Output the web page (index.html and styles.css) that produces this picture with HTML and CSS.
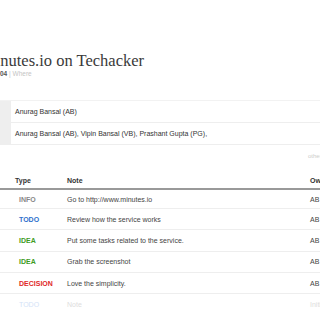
FILE: index.html
```html
<!DOCTYPE html>
<html lang="en">
<head>
  <meta charset="UTF-8">
  <title>Minutes.io on Techacker</title>
  <link rel="stylesheet" href="styles.css">
</head>
<body>
  <div class="page">
    <h1 class="title">Minutes.io on Techacker</h1>
    <div class="meta"><b>04</b> <span class="sep">|</span> <span class="where">Where</span></div>

    <div class="people">
      <div class="prow">
        <div class="plabel"></div>
        <div class="pval">Anurag Bansal (AB)</div>
      </div>
      <div class="prow">
        <div class="plabel"></div>
        <div class="pval">Anurag Bansal (AB), Vipin Bansal (VB), Prashant Gupta (PG),</div>
      </div>
    </div>

    <div class="others">others</div>

    <div class="notes">
      <div class="nrow head">
        <div class="type">Type</div>
        <div class="note">Note</div>
        <div class="owner">Owner</div>
      </div>
      <div class="nrow first">
        <div class="type info">INFO</div>
        <div class="note">Go to http://www.minutes.io</div>
        <div class="owner">AB</div>
      </div>
      <div class="nrow">
        <div class="type todo">TODO</div>
        <div class="note">Review how the service works</div>
        <div class="owner">AB</div>
      </div>
      <div class="nrow">
        <div class="type idea">IDEA</div>
        <div class="note">Put some tasks related to the service.</div>
        <div class="owner">AB</div>
      </div>
      <div class="nrow">
        <div class="type idea">IDEA</div>
        <div class="note">Grab the screenshot</div>
        <div class="owner">AB</div>
      </div>
      <div class="nrow">
        <div class="type decision">DECISION</div>
        <div class="note">Love the simplicity.</div>
        <div class="owner">AB</div>
      </div>
      <div class="nrow new">
        <div class="type todo">TODO</div>
        <div class="note">Note</div>
        <div class="owner">Initials</div>
      </div>
    </div>
  </div>
</body>
</html>
```

FILE: styles.css
```css
body {
  margin: 0;
  overflow: hidden;
  background: #fff;
  font-family: "Liberation Sans", Arial, sans-serif;
  color: #444;
}
.page {
  width: 360px;
  padding-top: 52px;
}
.title {
  margin: 0 0 0 -19px;
  font-family: "Liberation Serif", "Times New Roman", serif;
  font-weight: normal;
  font-size: 16.5px;
  line-height: 18px;
  color: #3a3a3a;
}
.meta {
  font-size: 6.5px;
  line-height: 8px;
  color: #c4c4c4;
}
.meta b {
  color: #555;
}
.people {
  margin-top: 22px;
  border-top: 1px solid #f2f2f2;
}
.prow {
  display: flex;
  height: 21px;
  border-bottom: 1px solid #eee;
}
.plabel {
  width: 11px;
  background: #eee;
}
.pval {
  padding-left: 4px;
  font-size: 7px;
  line-height: 21px;
  color: #333;
}
.others {
  width: 320px;
  margin-top: 8px;
  padding-left: 308px;
  font-size: 6px;
  color: #ccc;
}
.notes {
  margin-top: 14px;
}
.nrow {
  display: grid;
  grid-template-columns: 67px 243px 50px;
  height: 20.3px;
  align-items: center;
  border-bottom: 1px solid #eee;
  font-size: 7px;
  color: #444;
}
.nrow.head {
  height: 15px;
  border-bottom: 2px solid #999;
  font-weight: bold;
  color: #333;
}
.nrow.first {
  height: 18px;
}
.nrow.new {
  border-bottom: none;
  color: #ddd;
}
.type {
  padding-left: 19px;
  font-weight: bold;
}
.head .type {
  padding-left: 15px;
}
.info {
  color: #888;
}
.todo {
  color: #2f6fcc;
}
.idea {
  color: #3e9c1e;
}
.decision {
  color: #e02828;
}
.new .type {
  color: #d4e3f7;
  font-weight: normal;
}
```
